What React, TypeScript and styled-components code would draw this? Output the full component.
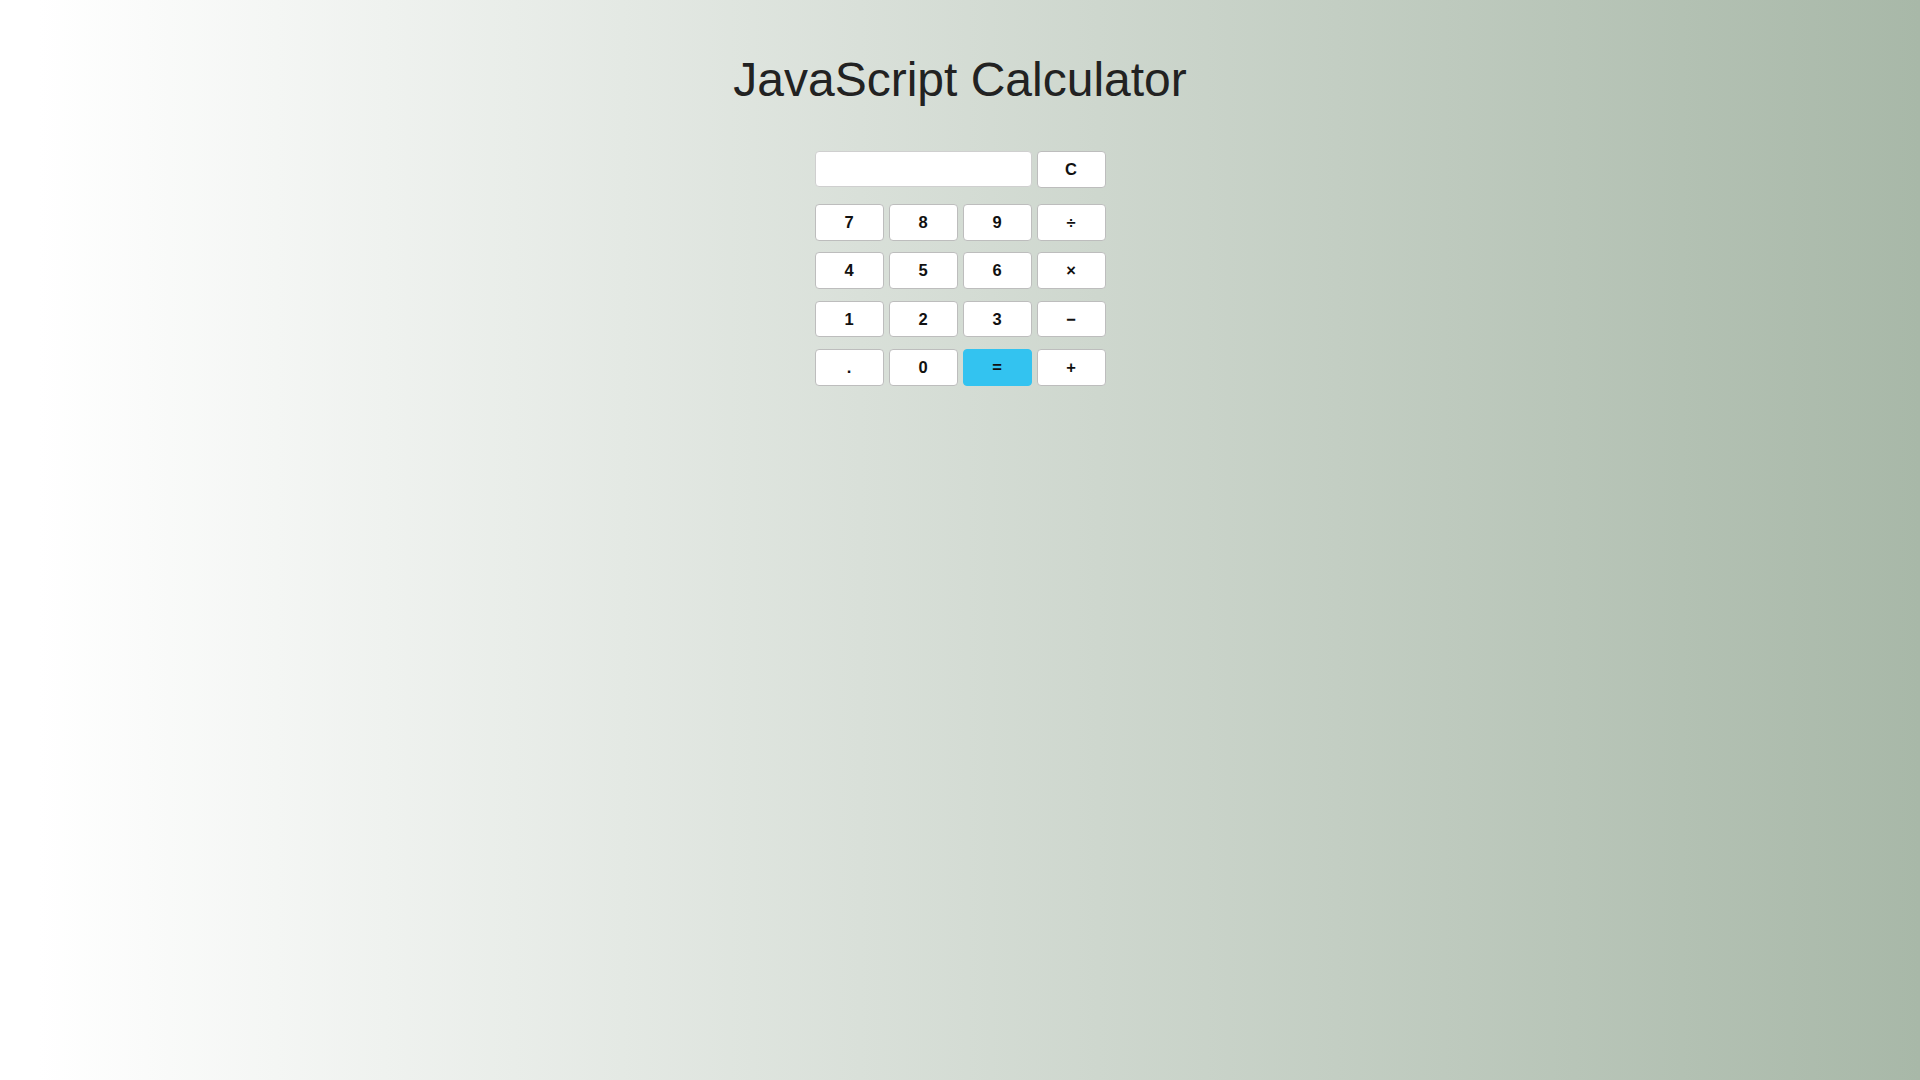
import React, { useState } from "react";
import styled, { createGlobalStyle } from "styled-components";

const GlobalStyle = createGlobalStyle`
  html, body {
    margin: 0;
    padding: 0;
  }
  body {
    min-height: 100vh;
    background: linear-gradient(to right, #ffffff 2%, #a8b8a8 100%);
    font-family: "Liberation Sans", Arial, sans-serif;
  }
  * {
    box-sizing: border-box;
  }
`;

const Page = styled.div`
  min-height: 100vh;
  display: flex;
  flex-direction: column;
  align-items: center;
`;

const Titulo = styled.h1`
  margin: 52px 0 0 0;
  font-size: 48px;
  font-weight: normal;
  line-height: normal;
  color: #222;
`;

const Calculadora = styled.div`
  margin-top: 44px;
  display: flex;
  flex-direction: column;
  gap: 16.5px;
`;

const Grade = styled.div<{ $rowGap?: number }>`
  display: grid;
  grid-template-columns: repeat(4, 69px);
  column-gap: 5px;
  row-gap: ${(p) => p.$rowGap ?? 0}px;
  align-items: center;
`;

const Visor = styled.input`
  grid-column: span 3;
  height: 36px;
  padding: 0 10px;
  border: 1px solid #cfcfcf;
  border-radius: 4px;
  background: #fff;
  font-family: "Liberation Sans", Arial, sans-serif;
  font-size: 17px;
  outline: none;
`;

const Botao = styled.button<{ $primario?: boolean }>`
  height: 36.7px;
  padding: 0;
  border: 1px solid ${(p) => (p.$primario ? "#33c3f0" : "#bdbdbd")};
  border-radius: 4px;
  background: ${(p) => (p.$primario ? "#33c3f0" : "#fff")};
  color: #111;
  font-family: "Liberation Sans", Arial, sans-serif;
  font-size: 16.5px;
  font-weight: bold;
  cursor: pointer;
`;

const teclas = ["7", "8", "9", "÷", "4", "5", "6", "×", "1", "2", "3", "−", ".", "0", "=", "+"];

const App: React.FC = () => {
  const [visor, setVisor] = useState("");

  const clicar = (t: string) => {
    if (t === "=") {
      try {
        const expr = visor.replace(/÷/g, "/").replace(/×/g, "*").replace(/−/g, "-");
        // eslint-disable-next-line no-new-func
        setVisor(String(Function(`return (${expr})`)()));
      } catch {
        setVisor("Erro");
      }
      return;
    }
    setVisor((v) => v + t);
  };

  return (
    <>
      <GlobalStyle />
      <Page>
        <Titulo>JavaScript Calculator</Titulo>
        <Calculadora>
          <Grade>
            <Visor value={visor} onChange={(e) => setVisor(e.target.value)} />
            <Botao onClick={() => setVisor("")}>C</Botao>
          </Grade>
          <Grade $rowGap={11.6}>
            {teclas.map((t) => (
              <Botao key={t} $primario={t === "="} onClick={() => clicar(t)}>
                {t}
              </Botao>
            ))}
          </Grade>
        </Calculadora>
      </Page>
    </>
  );
};

export default App;
